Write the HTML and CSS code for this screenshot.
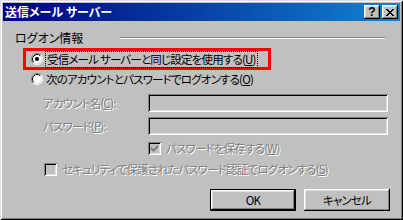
FILE: index.html
```html
<!DOCTYPE html>
<html lang="ja">
<head>
<meta charset="utf-8">
<title>送信メール サーバー</title>
<link rel="stylesheet" href="styles.css">
</head>
<body>
<div class="window">
  <div class="titlebar">
    <span class="title">送信メール サーバー</span>
    <div class="tbuttons">
      <span class="tbtn help">?</span>
      <span class="tbtn close"><svg width="8" height="7" viewBox="0 0 8 7"><path d="M0 0h2v1h1v1h2V1h1V0h2v1H7v1H6v1H5v1h1v1h1v1h1v1H6V6H5V5H3v1H2v1H0V6h1V5h1V4h1V3H2V2H1V1H0z" fill="#000"/></svg></span>
    </div>
  </div>
  <div class="content">
    <div class="group-head">
      <span class="group-label">ログオン情報</span>
      <span class="etched"></span>
    </div>
    <div class="highlight">
      <div class="radio-row first">
        <span class="radio"><svg width="12" height="12" viewBox="0 0 12 12"><circle cx="6" cy="6" r="5" fill="#fff"/><path d="M9.89 2.11A5.5 5.5 0 0 0 2.11 9.89" fill="none" stroke="#808080"/><path d="M2.11 9.89A5.5 5.5 0 0 0 9.89 2.11" fill="none" stroke="#fff"/><path d="M9.18 2.82A4.5 4.5 0 0 0 2.82 9.18" fill="none" stroke="#000"/><path d="M2.82 9.18A4.5 4.5 0 0 0 9.18 2.82" fill="none" stroke="#dfdfdf"/><circle cx="6" cy="6" r="2" fill="#000"/></svg></span>
        <span class="focus text">受信メール サーバーと同じ設定を使用する(<u>U</u>)</span>
      </div>
    </div>
    <div class="radio-row second">
      <span class="radio"><svg width="12" height="12" viewBox="0 0 12 12"><circle cx="6" cy="6" r="5" fill="#fff"/><path d="M9.89 2.11A5.5 5.5 0 0 0 2.11 9.89" fill="none" stroke="#808080"/><path d="M2.11 9.89A5.5 5.5 0 0 0 9.89 2.11" fill="none" stroke="#fff"/><path d="M9.18 2.82A4.5 4.5 0 0 0 2.82 9.18" fill="none" stroke="#000"/><path d="M2.82 9.18A4.5 4.5 0 0 0 9.18 2.82" fill="none" stroke="#dfdfdf"/></svg></span>
      <span class="text">次のアカウントとパスワードでログオンする(<u>O</u>)</span>
    </div>
    <div class="field-row account">
      <span class="field-label text disabled">アカウント名(<u>C</u>):</span>
      <span class="input"></span>
    </div>
    <div class="field-row password">
      <span class="field-label text disabled">パスワード(<u>P</u>):</span>
      <span class="input"></span>
    </div>
    <div class="check-row save">
      <span class="checkbox"><svg width="7" height="7" viewBox="0 0 7 7"><path d="M0 2h1v3H0zM1 3h1v3H1zM2 4h1v3H2zM3 3h1v3H3zM4 2h1v3H4zM5 1h1v3H5zM6 0h1v3H6z" fill="#808080"/></svg></span>
      <span class="text disabled">パスワードを保存する(<u>W</u>)</span>
    </div>
    <div class="check-row secure">
      <span class="checkbox"></span>
      <span class="text disabled">セキュリティで保護されたパスワード認証でログオンする(<u>S</u>)</span>
    </div>
    <div class="buttons">
      <span class="btn default text">OK</span>
      <span class="btn text">キャンセル</span>
    </div>
  </div>
</div>
</body>
</html>
```
FILE: styles.css
```css
html, body {
  margin: 0;
  padding: 0;
  background: #c0c0c0;
}
body {
  font-family: "Noto Sans CJK JP", "Noto Sans", sans-serif;
  font-size: 12px;
  font-feature-settings: "palt";
  color: #000;
  line-height: 14px;
}
.text {
  font-size: 11.5px;
  letter-spacing: -0.8px;
  white-space: nowrap;
}
.window {
  width: 403px;
  height: 220px;
  box-sizing: border-box;
  padding: 3px;
  background: #c0c0c0;
  box-shadow: inset 1px 1px #dfdfdf, inset -1px -1px #000, inset 2px 2px #fff, inset -2px -2px #808080;
  display: flex;
  flex-direction: column;
}
.titlebar {
  height: 18px;
  flex: 0 0 18px;
  background: linear-gradient(to right, #000080, #1084d0);
  display: flex;
  align-items: center;
  justify-content: space-between;
  padding: 0 2px;
  color: #fff;
}
.title {
  font-weight: bold;
  line-height: 18px;
  white-space: nowrap;
}
.tbuttons {
  display: flex;
  gap: 2px;
}
.tbtn {
  width: 16px;
  height: 14px;
  box-sizing: border-box;
  background: #c0c0c0;
  box-shadow: inset -1px -1px #000, inset 1px 1px #fff, inset -2px -2px #808080, inset 2px 2px #dfdfdf;
  display: flex;
  align-items: center;
  justify-content: center;
  color: #000;
  font-family: "Liberation Sans", sans-serif;
  font-weight: bold;
  font-size: 12px;
  line-height: 12px;
}
.content {
  flex: 1;
  display: flex;
  flex-direction: column;
  padding-left: 12px;
}
.group-head {
  margin-top: 10px;
  height: 14px;
  display: flex;
  align-items: center;
}
.group-label {
  white-space: nowrap;
}
.etched {
  margin-left: auto;
  margin-right: 15px;
  width: 265px;
  height: 0;
  border-top: 1px solid #808080;
  border-bottom: 1px solid #fff;
}
.highlight {
  margin-top: 3px;
  margin-left: 8px;
  width: 248px;
  height: 22px;
  box-sizing: border-box;
  border: 3px solid #f00;
  display: flex;
  align-items: center;
}
.radio-row {
  display: flex;
  align-items: center;
  gap: 3px;
  height: 14px;
}
.radio {
  width: 12px;
  height: 12px;
  display: block;
}
.radio svg { display: block; }
.radio-row.first {
  padding-left: 5px;
}
.focus {
  outline: 1px dotted #000;
  outline-offset: 0;
  padding: 0 1px;
  line-height: 15px;
}
.radio-row.second {
  margin-top: 2px;
  padding-left: 16px;
}
u {
  text-decoration: underline;
  text-underline-offset: 1px;
}
.disabled {
  color: #808080;
  text-shadow: 1px 1px 0 #fff;
}
.field-row {
  display: flex;
  align-items: center;
  padding-left: 28px;
}
.field-row.account { margin-top: 8px; }
.field-row.password { margin-top: 5px; }
.field-label {
  width: 105px;
}
.input {
  width: 240px;
  height: 18px;
  box-sizing: border-box;
  background: #c0c0c0;
  box-shadow: inset 1px 1px #808080, inset -1px -1px #fff, inset 2px 2px #000, inset -2px -2px #dfdfdf;
}
.check-row {
  display: flex;
  align-items: center;
  gap: 5px;
  height: 14px;
}
.check-row.save {
  margin-top: 6px;
  padding-left: 133px;
}
.check-row.secure {
  margin-top: 7px;
  padding-left: 29px;
}
.checkbox {
  width: 13px;
  height: 13px;
  box-sizing: border-box;
  background: #c0c0c0;
  box-shadow: inset 1px 1px #808080, inset -1px -1px #fff, inset 2px 2px #000, inset -2px -2px #dfdfdf;
  display: flex;
  align-items: center;
  justify-content: center;
}
.checkbox svg { display: block; }
.buttons {
  margin-top: 13px;
  display: flex;
  justify-content: flex-end;
  gap: 8px;
  padding-right: 10px;
}
.btn {
  width: 86px;
  height: 22px;
  box-sizing: border-box;
  display: flex;
  align-items: center;
  justify-content: center;
  background: #c0c0c0;
  box-shadow: inset -1px -1px #000, inset 1px 1px #fff, inset -2px -2px #808080, inset 2px 2px #dfdfdf;
}
.btn.default {
  border: 1px solid #000;
}
```
